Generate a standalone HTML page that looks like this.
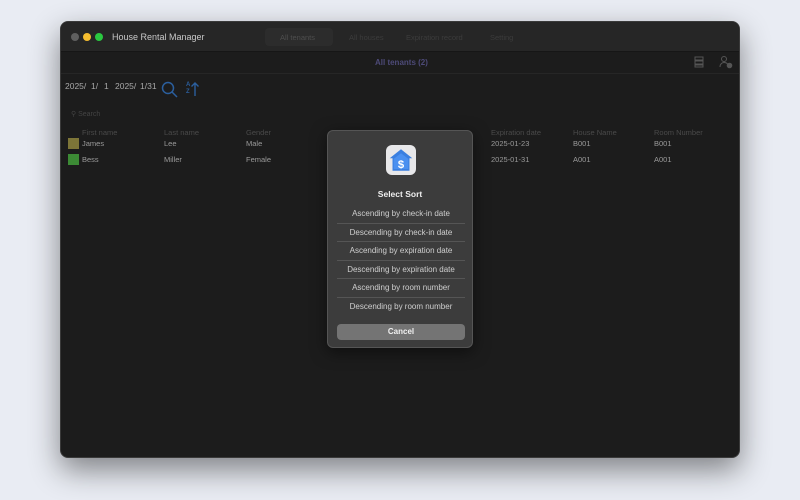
<!DOCTYPE html>
<html><head><meta charset="utf-8"><style>
*{margin:0;padding:0;box-sizing:border-box}
body{width:800px;height:500px;background:#e9ecf3;font-family:"Liberation Sans",sans-serif;position:relative;overflow:hidden}
.win{position:absolute;left:60px;top:21px;width:680px;height:437px;background:#1c1c1c;border-radius:8px;box-shadow:0 12px 30px rgba(0,0,0,.45);overflow:hidden;border:1px solid #3a3a3a}
.tb{position:absolute;left:0;top:0;width:100%;height:30px;background:#262626;border-bottom:1px solid #161616}
.dot{position:absolute;top:11px;width:8px;height:8px;border-radius:50%}
.t{position:absolute;font-size:7.5px;color:#9a9a9a;white-space:nowrap}
.h{color:#4a4a4a}
.d{position:absolute;top:59px;font-size:8.5px;color:#a8a8a8;white-space:nowrap}
.modal{position:absolute;left:327px;top:130px;width:146px;height:218px;background:#3c3c3c;border-radius:6px;border:1px solid #555;box-shadow:0 4px 16px rgba(0,0,0,.5)}
.opt{position:absolute;left:9px;width:128px;text-align:center;font-size:8px;color:#cfcfcf;height:18.5px;line-height:18.5px;border-bottom:1px solid #555}
</style></head><body>
<div class="win">
 <div class="tb">
  <div class="dot" style="left:10px;background:#5f5f5f"></div>
  <div class="dot" style="left:22px;background:#f5bd2f"></div>
  <div class="dot" style="left:34px;background:#2ac840"></div>
  <div class="t" style="left:51px;top:10px;font-size:9px;color:#c8c8c8">House Rental Manager</div>
  <div style="position:absolute;left:204px;top:6px;width:68px;height:18px;background:#2c2c2c;border-radius:4px"></div>
  <div class="t" style="left:219px;top:11px;color:#4e4e4e">All tenants</div>
  <div class="t" style="left:288px;top:11px;color:#3c3c3c">All houses</div>
  <div class="t" style="left:345px;top:11px;color:#3c3c3c">Expiration record</div>
  <div class="t" style="left:429px;top:11px;color:#3c3c3c">Setting</div>
 </div>
 <div style="position:absolute;top:51px;left:0;width:100%;height:1px;background:#262626"></div>
 <div class="t" style="left:314px;top:36px;color:#4d4a78;font-weight:bold;font-size:8px">All tenants (2)</div>
 <svg style="position:absolute;left:632px;top:34px" width="12" height="12" viewBox="0 0 12 12" fill="none" stroke="#555" stroke-width="1"><rect x="2" y="1" width="8" height="3"/><rect x="2" y="5" width="8" height="3"/><rect x="2" y="9" width="8" height="2"/></svg>
 <svg style="position:absolute;left:658px;top:33px" width="14" height="14" viewBox="0 0 14 14" fill="none" stroke="#555" stroke-width="1"><circle cx="5" cy="4" r="2.5"/><path d="M1 12c0-3 2-4.5 4-4.5s3 .7 3.5 1.5"/><circle cx="10.5" cy="10.5" r="2.3" fill="#555"/></svg>
 <div class="d" style="left:4px">2025/</div>
 <div class="d" style="left:30px">1/</div>
 <div class="d" style="left:43px">1</div>
 <div class="d" style="left:54px">2025/</div>
 <div class="d" style="left:79px">1/31</div>
 <svg style="position:absolute;left:100px;top:59px" width="17" height="17" viewBox="0 0 17 17" fill="none" stroke="#2b5f9e" stroke-width="1.5"><circle cx="7" cy="7" r="5.5"/><path d="M11 11L16 16"/></svg>
 <div style="position:absolute;left:125px;top:60px;font-size:6px;line-height:6.5px;color:#2b5f9e;font-weight:bold">A<br>Z</div>
 <svg style="position:absolute;left:129px;top:59px" width="10" height="16" viewBox="0 0 10 16" fill="none" stroke="#2b5f9e" stroke-width="1.4"><path d="M5 15V2M1.5 5.5L5 2l3.5 3.5"/></svg>
 <div class="t" style="left:10px;top:88px;color:#444;font-size:7px">&#9906; Search</div>
 <div class="t h" style="left:21px;top:106px">First name</div>
 <div class="t h" style="left:103px;top:106px">Last name</div>
 <div class="t h" style="left:185px;top:106px">Gender</div>
 <div class="t h" style="left:430px;top:106px">Expiration date</div>
 <div class="t h" style="left:512px;top:106px">House Name</div>
 <div class="t h" style="left:593px;top:106px">Room Number</div>
 <div style="position:absolute;left:7px;top:116px;width:11px;height:11px;background:#7d7538"></div>
 <div style="position:absolute;left:7px;top:132px;width:11px;height:11px;background:#3c8a35"></div>
 <div class="t" style="left:21px;top:117px">James</div><div class="t" style="left:103px;top:117px">Lee</div><div class="t" style="left:185px;top:117px">Male</div>
 <div class="t" style="left:430px;top:117px">2025-01-23</div><div class="t" style="left:512px;top:117px">B001</div><div class="t" style="left:593px;top:117px">B001</div>
 <div class="t" style="left:21px;top:133px">Bess</div><div class="t" style="left:103px;top:133px">Miller</div><div class="t" style="left:185px;top:133px">Female</div>
 <div class="t" style="left:430px;top:133px">2025-01-31</div><div class="t" style="left:512px;top:133px">A001</div><div class="t" style="left:593px;top:133px">A001</div>
</div>
<div class="modal">
 <div style="position:absolute;left:58px;top:14px;width:30px;height:30px;background:#e8e8ea;border-radius:6px"></div>
 <svg style="position:absolute;left:60px;top:16px" width="26" height="26" viewBox="0 0 23 23"><path d="M11.5 2L1.5 10h2.5v11h15V10h2.5z" fill="#3a7fe0"/><path d="M11.5 5.5L5 10.5v9h13v-9z" fill="#4a90f0"/><text x="11.5" y="18.5" font-size="10" font-weight="bold" fill="#fff" text-anchor="middle" font-family="Liberation Sans">$</text></svg>
 <div style="position:absolute;top:58px;width:100%;text-align:center;font-size:8.5px;font-weight:bold;color:#eee">Select Sort</div>
 <div class="opt" style="top:74px">Ascending by check-in date</div>
 <div class="opt" style="top:92.5px">Descending by check-in date</div>
 <div class="opt" style="top:111px">Ascending by expiration date</div>
 <div class="opt" style="top:129.5px">Descending by expiration date</div>
 <div class="opt" style="top:148px">Ascending by room number</div>
 <div class="opt" style="top:166.5px;border:none">Descending by room number</div>
 <div style="position:absolute;left:9px;top:193px;width:128px;height:16px;background:#747474;border-radius:4px;text-align:center;line-height:16px;font-size:8px;font-weight:bold;color:#f0f0f0">Cancel</div>
</div>
</body></html>
